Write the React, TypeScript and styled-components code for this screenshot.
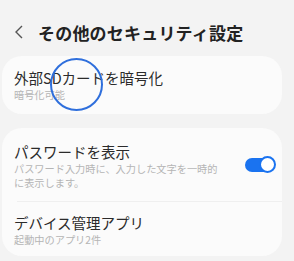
import React from "react";
import styled, { createGlobalStyle } from "styled-components";

const Global = createGlobalStyle`
  html, body { margin: 0; padding: 0; background: #f3f3f3; }
  body { font-family: "Noto Sans CJK JP", "Noto Sans", sans-serif; width: 294px; height: 261px; overflow: hidden; }
`;

const Page = styled.div`
  position: relative;
  width: 294px;
  height: 261px;
  background: #f3f3f3;
`;

const Header = styled.div`
  display: flex;
  align-items: center;
  height: 34px;
  padding: 15px 0 7px 14px;
  gap: 12px;
`;

const Back = styled.svg`
  width: 12px;
  height: 14px;
`;

const Title = styled.h1`
  margin: 0;
  font-size: 17px;
  font-weight: 700;
  color: #222;
  letter-spacing: 0.2px;
`;

const Card = styled.div<{ $mt: number }>`
  margin: ${(p) => p.$mt}px 12px 0 2px;
  background: #fbfbfb;
  border-radius: 20px;
  display: flex;
  flex-direction: column;
`;

const Row = styled.div<{ $pt: number; $pb: number }>`
  display: flex;
  align-items: center;
  padding: ${(p) => p.$pt}px 6px ${(p) => p.$pb}px 12px;
  gap: 12px;
`;

const Texts = styled.div`
  flex: 1;
  display: flex;
  flex-direction: column;
`;

const ItemTitle = styled.div`
  font-size: 14.5px;
  line-height: 20px;
  color: #2b2b2b;
`;

const ItemSub = styled.div`
  font-size: 10.2px;
  line-height: 14px;
  color: #b5b5b5;
`;

const Divider = styled.div`
  height: 1px;
  background: #efefef;
  margin: 0 0 0 15px;
`;

const Track = styled.div`
  position: relative;
  width: 27px;
  height: 14px;
  border-radius: 7px;
  background: #1a73f0;
  margin-top: -2px;
  margin-right: 4px;
`;

const Thumb = styled.div`
  position: absolute;
  top: -2.5px;
  right: -4px;
  width: 13px;
  height: 13px;
  border-radius: 50%;
  background: #fff;
  border: 2px solid #1a73f0;
`;

const Touch = styled.div`
  position: absolute;
  left: 50px;
  top: 58px;
  width: 49px;
  height: 49px;
  border-radius: 50%;
  border: 2.5px solid #2f6fdc;
`;

export default function App() {
  return (
    <Page>
      <Global />
      <Header>
        <Back viewBox="0 0 12 14">
          <path d="M8 1 L2 7 L8 13" fill="none" stroke="#555" strokeWidth="1.4" />
        </Back>
        <Title>その他のセキュリティ設定</Title>
      </Header>
      <Card $mt={0}>
        <Row $pt={12} $pb={12}>
          <Texts>
            <ItemTitle>外部SDカードを暗号化</ItemTitle>
            <ItemSub>暗号化可能</ItemSub>
          </Texts>
        </Row>
      </Card>
      <Card $mt={14}>
        <Row $pt={14} $pb={11}>
          <Texts>
            <ItemTitle>パスワードを表示</ItemTitle>
            <ItemSub>
              パスワード入力時に、入力した文字を一時的
              <br />
              に表示します。
            </ItemSub>
          </Texts>
          <Track>
            <Thumb />
          </Track>
        </Row>
        <Divider />
        <Row $pt={11} $pb={9}>
          <Texts>
            <ItemTitle>デバイス管理アプリ</ItemTitle>
            <ItemSub>起動中のアプリ2件</ItemSub>
          </Texts>
        </Row>
      </Card>
      <Touch />
    </Page>
  );
}
